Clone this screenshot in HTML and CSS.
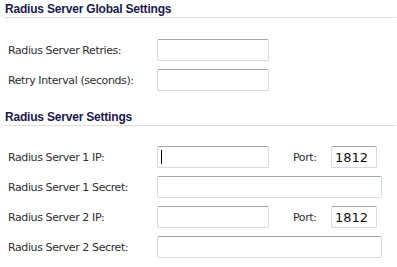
FILE: index.html
```html
<!DOCTYPE html>
<html lang="en">
<head>
    <meta charset="UTF-8">
    <title>Radius Settings</title>
    <link rel="stylesheet" href="styles.css">
</head>
<body>
    <!-- Global settings -->
    <h2 class="section-title">Radius Server Global Settings</h2>
    <div class="form global-form">
        <div class="row">
            <label class="label">Radius Server Retries:</label>
            <input type="text" class="field">
        </div>
        <div class="row">
            <label class="label">Retry Interval (seconds):</label>
            <input type="text" class="field">
        </div>
    </div>

    <!-- Server settings -->
    <h2 class="section-title second">Radius Server Settings</h2>
    <div class="form server-form">
        <div class="row">
            <label class="label">Radius Server 1 IP:</label>
            <span class="caret-field"><input type="text" class="field"></span>
            <label class="port-label">Port:</label>
            <input type="text" class="field port" value="1812">
        </div>
        <div class="row">
            <label class="label">Radius Server 1 Secret:</label>
            <input type="password" class="field wide">
        </div>
        <div class="row">
            <label class="label">Radius Server 2 IP:</label>
            <input type="text" class="field">
            <label class="port-label">Port:</label>
            <input type="text" class="field port" value="1812">
        </div>
        <div class="row">
            <label class="label">Radius Server 2 Secret:</label>
            <input type="password" class="field wide">
        </div>
    </div>
</body>
</html>
```

FILE: styles.css
```css
* {
    margin: 0;
    padding: 0;
    box-sizing: border-box;
}
body {
    font-family: 'DejaVu Sans', sans-serif;
    font-size: 11px;
    color: #2e2e2e;
    background: #fff;
    width: 397px;
    overflow: hidden;
}
.section-title {
    height: 18px;
    margin: 0 1px 0 5px;
    padding-top: 2px;
    font-family: 'Liberation Sans', sans-serif;
    font-size: 12px;
    line-height: 15px;
    font-weight: bold;
    letter-spacing: -0.2px;
    color: #1a1a4e;
    border-bottom: 1px solid #dcdcdc;
}
.section-title.second {
    margin-top: 13px;
}
.global-form {
    padding-top: 17px;
}
.server-form {
    padding-top: 16px;
}
.row {
    display: flex;
    align-items: center;
    height: 30px;
    padding-left: 8px;
}
.label {
    width: 149px;
    letter-spacing: -0.4px;
}
.field {
    width: 112px;
    height: 22px;
    padding: 0 3px;
    border: 1px solid #d6d9de;
    border-top-color: #a4a8ae;
    border-radius: 2px;
    font-family: 'DejaVu Sans', sans-serif;
    font-size: 13px;
    color: #111;
    background: #fff;
    outline: none;
}
.field.wide {
    width: 225px;
}
.field.port {
    width: 46px;
}
.port-label {
    width: 38px;
    margin-left: 24px;
    letter-spacing: -0.4px;
}
.caret-field {
    position: relative;
    display: flex;
}
.caret-field::after {
    content: "";
    position: absolute;
    left: 4px;
    top: 4px;
    width: 1px;
    height: 14px;
    background: #000;
}
```
